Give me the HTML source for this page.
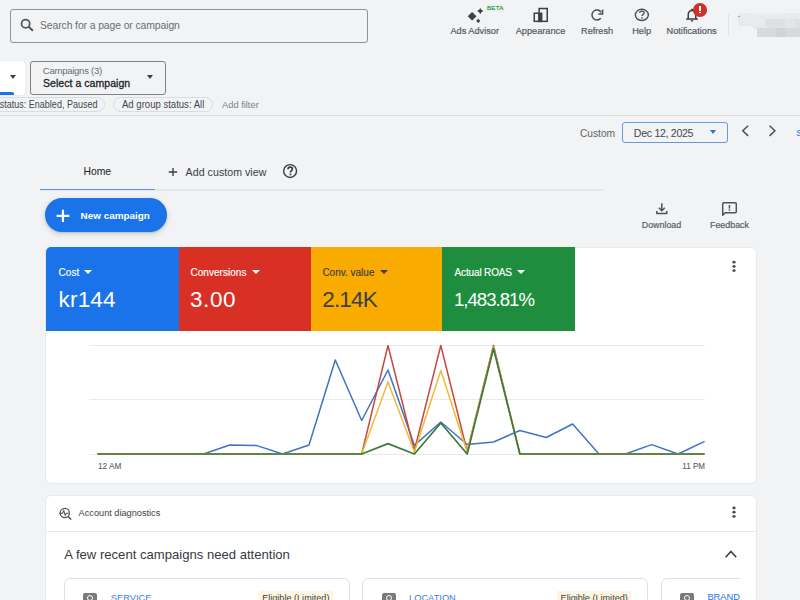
<!DOCTYPE html>
<html><head><meta charset="utf-8">
<style>
*{box-sizing:border-box;margin:0;padding:0}
html,body{width:800px;height:600px;overflow:hidden;background:#f1f3f4;font-family:"Liberation Sans",sans-serif;color:#3c4043}
.a{position:absolute;white-space:nowrap;line-height:1}
.tb{font-size:9.2px;color:#55595e;top:26.9px;transform:translateX(-50%);-webkit-text-stroke:0.2px #55595e}
.chip{position:absolute;height:14.5px;border:1px solid #dadce0;border-radius:8px}
.tile{position:absolute;top:247.6px;height:83px;color:#fff}
.tile .l{position:absolute;top:267.5px;font-size:10px;line-height:1}
.tl{font-size:10px;color:#fff;top:267.6px;-webkit-text-stroke:0.15px currentColor}
.tv{font-size:22.5px;color:#fff;top:288.5px}
.car{width:0;height:0;border-left:4px solid transparent;border-right:4px solid transparent;border-top:4px solid #fff}
.lbl{font-size:8.9px;color:#575b5f;top:220.5px;transform:translateX(-50%);-webkit-text-stroke:0.18px #575b5f}
.sub{position:absolute;top:578px;height:40px;border:1px solid #e0e1e3;border-radius:6px;background:#fff}
.ic{position:absolute;top:592.7px;width:14px;height:12px;background:#7a7a7a;border-radius:2px}
.lnk{font-size:9.3px;color:#3b7ddd;top:593.6px}
.elig{position:absolute;top:590.5px;width:74px;height:14px;background:#fdf5e0}
.elt{font-size:9.1px;color:#3c4043;top:594px}
</style></head><body>

<!-- Search -->
<div class="a" style="left:9.5px;top:9px;width:358.5px;height:33.5px;border:1px solid #8f9296;border-radius:3px"></div>
<svg class="a" style="left:19px;top:16px" width="16" height="17" viewBox="19 16 16 17"><circle cx="25.6" cy="23.7" r="4.1" stroke="#4f5357" stroke-width="1.7" fill="none"/><path d="M28.6 26.7 L32.9 30.7" stroke="#4f5357" stroke-width="1.9"/></svg>
<div class="a" style="left:40px;top:21px;font-size:10.4px;color:#6a6e72;letter-spacing:-0.1px">Search for a page or campaign</div>

<!-- Top icons -->
<svg class="a" style="left:466px;top:7px" width="20" height="18" viewBox="466 7 20 18">
  <path fill="#3c4043" d="M472.1 11.9 L476.5 16.25 L472.1 20.6 L467.75 16.25Z"/>
  <path fill="#3c4043" d="M480.25 7.9 L481.35 9.85 L483.4 11 L481.35 12.15 L480.25 14.2 L479.15 12.15 L477.1 11 L479.15 9.85Z M479.15 9.85 H481.35 V12.15 H479.15Z"/>
  <path fill="#3c4043" d="M478.25 18.8 L480.3 21 L478.25 23.1 L476.2 21Z"/>
</svg>
<div class="a" style="left:485px;top:4.4px;width:19px;height:7.5px;background:#e9f3ec;border-radius:2px"></div>
<div class="a" style="left:486.9px;top:5.4px;font-size:6.2px;color:#2a8a45;letter-spacing:0.25px;-webkit-text-stroke:0.15px #2a8a45">BETA</div>
<div class="a tb" style="left:474.75px">Ads Advisor</div>

<svg class="a" style="left:533px;top:7px" width="16" height="16" viewBox="533 7 16 16">
  <rect x="539.15" y="8.5" width="8.1" height="12.85" stroke="#3c4043" stroke-width="1.5" fill="none"/>
  <rect x="534.25" y="13.25" width="5" height="8.1" stroke="#3c4043" stroke-width="1.5" fill="none"/>
  <rect x="538.4" y="12.5" width="4" height="9.6" fill="#3c4043"/>
</svg>
<div class="a tb" style="left:540.5px">Appearance</div>

<svg class="a" style="left:589px;top:7px" width="17" height="16" viewBox="589 7 17 16"><path d="M601.2 12.3 A5 5 0 1 0 600.8 18.2" stroke="#4a4e52" stroke-width="1.45" fill="none"/><path d="M602.6 9.6 V13.9 H598.4" stroke="#4a4e52" stroke-width="1.5" fill="none"/></svg>
<div class="a tb" style="left:597.1px">Refresh</div>

<svg class="a" style="left:632px;top:6px" width="20" height="20" viewBox="632 6 20 20">
  <ellipse cx="641.85" cy="14.9" rx="6.5" ry="5.6" stroke="#4a4e52" stroke-width="1.4" fill="none"/>
  <path d="M639.7 13.1 C639.7 11.9 640.6 11.2 641.9 11.2 C643.2 11.2 644.1 11.9 644.1 12.9 C644.1 14.4 642 14.4 642 16.1" stroke="#4a4e52" stroke-width="1.3" fill="none"/>
  <rect x="641.25" y="17.2" width="1.5" height="1.4" fill="#4a4e52"/>
</svg>
<div class="a tb" style="left:641.6px">Help</div>

<svg class="a" style="left:683px;top:7.2px" width="18" height="16" viewBox="0 0 24 24" preserveAspectRatio="none"><path fill="#3c4043" d="M12 22c1.1 0 2-.9 2-2h-4c0 1.1.9 2 2 2zm6-6v-5c0-3.07-1.63-5.64-4.5-6.32V4c0-.83-.67-1.5-1.5-1.5s-1.5.67-1.5 1.5v.68C7.64 5.36 6 7.92 6 11v5l-2 2v1h16v-1l-2-2zm-2 1H8v-6c0-2.48 1.51-4.5 4-4.5s4 2.020 4 4.5v6z"/></svg>
<div class="a" style="left:692.9px;top:3.3px;width:13.8px;height:13.4px;border-radius:50%;background:#cf3029"></div>
<div class="a" style="left:699.1px;top:6.1px;width:2px;height:4.8px;background:#fff"></div>
<div class="a" style="left:699.1px;top:11.9px;width:2px;height:1.6px;background:#fff"></div>
<div class="a tb" style="left:691.6px">Notifications</div>

<div class="a" style="left:728px;top:14px;width:1px;height:22px;background:#e2e3e5"></div>
<!-- blurred account -->
<div class="a" style="left:738px;top:13px;width:62px;height:13px;background:#e9eaec;border-top-left-radius:3px"></div>
<div class="a" style="left:752px;top:12px;width:30px;height:3px;background:#eeeff1"></div>
<div class="a" style="left:738px;top:16px;width:2px;height:1.2px;background:#9a9ca0"></div>
<div class="a" style="left:765px;top:19px;width:35px;height:9px;background:#dfe0e2"></div>
<div class="a" style="left:785px;top:19px;width:10px;height:9px;background:#e4e5e7"></div>
<div class="a" style="left:753px;top:26px;width:14px;height:3px;background:#e6e7e9"></div>
<div class="a" style="left:757px;top:28px;width:43px;height:8.5px;background:#d8d9db"></div>
<div class="a" style="left:776px;top:28px;width:10px;height:8.5px;background:#d2d3d5"></div>
<!-- Row 2 -->
<div class="a" style="left:-6px;top:60.5px;width:31px;height:34.5px;background:#fff;border-radius:3px;box-shadow:0 0 1px rgba(0,0,0,.25)"></div>
<div class="a car" style="left:9.8px;top:75px;border-top:4.3px solid #3c4043;border-left-width:3.8px;border-right-width:3.8px"></div>
<div class="a" style="left:0;top:92px;width:14px;height:3px;background:#1a73e8;border-radius:0 2px 0 0"></div>

<div class="a" style="left:30.25px;top:60.5px;width:135.5px;height:34px;border:1px solid #7d8185;border-radius:3px"></div>
<div class="a" style="left:42.8px;top:65.6px;font-size:9.6px;color:#6a6e72;letter-spacing:-0.3px">Campaigns (3)</div>
<div class="a" style="left:43px;top:77.6px;font-size:10.5px;color:#202124;-webkit-text-stroke:0.3px #202124;letter-spacing:0.05px">Select a campaign</div>
<div class="a car" style="left:147.2px;top:75px;border-top:4.3px solid #3c4043;border-left-width:3.6px;border-right-width:3.6px"></div>

<div class="chip" style="left:-20px;top:97px;width:125px"></div>
<div class="a" style="left:-11.4px;width:108.4px;top:99.5px;font-size:10px;color:#44484c;transform:scaleX(0.9);transform-origin:100% 0">status: Enabled, Paused</div>
<div class="chip" style="left:112.5px;top:97px;width:100px"></div>
<div class="a" style="left:121.5px;top:99.5px;font-size:10px;color:#44484c;transform:scaleX(0.955);transform-origin:0 0">Ad group status: All</div>
<div class="a" style="left:222px;top:99.7px;font-size:9.8px;color:#7d8185;transform:scaleX(0.95);transform-origin:0 0">Add filter</div>

<div class="a" style="left:0;top:115px;width:800px;height:1px;background:#dadce0"></div>

<!-- Date row -->
<div class="a" style="left:580px;top:128.5px;font-size:10.2px;color:#5f6368">Custom</div>
<div class="a" style="left:621.75px;top:122.2px;width:106px;height:20.5px;border:1px solid #6b98d6;border-radius:3px"></div>
<div class="a" style="left:633.8px;top:128px;font-size:10.6px;color:#45494d;letter-spacing:-0.3px">Dec 12, 2025</div>
<div class="a car" style="left:710px;top:130px;border-top:4px solid #2a6fd0;border-left-width:3.6px;border-right-width:3.6px"></div>
<svg class="a" style="left:739px;top:124px" width="12" height="15" viewBox="739 124 12 15"><path d="M748.1 125.7 L742.8 130.8 L748.1 135.9" stroke="#4c5054" stroke-width="1.5" fill="none"/></svg>
<svg class="a" style="left:766px;top:124px" width="12" height="15" viewBox="766 124 12 15"><path d="M769.6 125.7 L774.9 130.8 L769.6 135.9" stroke="#4c5054" stroke-width="1.5" fill="none"/></svg>
<div class="a" style="left:796.5px;top:127.5px;font-size:10px;color:#1a73e8">s</div>

<!-- Tabs -->
<div class="a" style="left:83.4px;top:167.1px;font-size:10.4px;color:#202124">Home</div>
<div class="a" style="left:40px;top:189px;width:562.5px;height:1.5px;background:#e6e7e9"></div>
<div class="a" style="left:40.3px;top:188.9px;width:114.4px;height:1.3px;background:#5d93d8"></div>
<svg class="a" style="left:167px;top:166px" width="12" height="12" viewBox="167 166 12 12"><path d="M173 168.1 V176 M168.75 172.05 H177.2" stroke="#3c4043" stroke-width="1.4"/></svg>
<div class="a" style="left:185.6px;top:166.8px;font-size:10.6px;color:#3c4043;letter-spacing:0.05px">Add custom view</div>
<svg class="a" style="left:281px;top:162px" width="18" height="18" viewBox="281 162 18 18">
  <circle cx="290.1" cy="171.05" r="6.45" stroke="#3c4043" stroke-width="1.45" fill="none"/>
  <path d="M288 169.2 C288 167.9 288.9 167.1 290.2 167.1 C291.5 167.1 292.4 167.9 292.4 169 C292.4 170.6 290.4 170.6 290.4 172.6" stroke="#3c4043" stroke-width="1.7" fill="none"/>
  <rect x="289.55" y="173.6" width="1.7" height="1.6" fill="#3c4043"/>
</svg>

<!-- New campaign -->
<div class="a" style="left:45.3px;top:198.4px;width:121.9px;height:33.8px;border-radius:17px;background:#1a73e8;box-shadow:0 1px 2px rgba(60,64,67,.22),0 2px 5px 1px rgba(60,64,67,.12)"></div>
<svg class="a" style="left:55px;top:208px" width="16" height="16" viewBox="55 208 16 16"><path d="M62.95 209.7 V221.9 M56.6 215.8 H69.3" stroke="#fff" stroke-width="2.2"/></svg>
<div class="a" style="left:80.6px;top:211px;font-size:9.9px;color:#fff;font-weight:bold">New campaign</div>

<!-- Download / Feedback -->
<svg class="a" style="left:654px;top:202px" width="15" height="14" viewBox="654 202 15 14">
  <path d="M661.8 203.3 V210.6 M658.8 207.7 L661.8 210.7 L664.8 207.7" stroke="#4f5357" stroke-width="1.5" fill="none"/>
  <path d="M656.8 211 V213.6 H666.8 V211" stroke="#4f5357" stroke-width="1.5" fill="none" stroke-linejoin="round"/>
</svg>
<div class="a lbl" style="left:661.5px">Download</div>
<svg class="a" style="left:720px;top:200px" width="19" height="18" viewBox="720 200 19 18">
  <path d="M722.7 215.2 V203.8 Q722.7 202.7 723.8 202.7 H735.3 Q736.3 202.7 736.3 203.8 V211.8 Q736.3 212.8 735.3 212.8 H725.2 Z" stroke="#4f5357" stroke-width="1.45" fill="none" stroke-linejoin="round"/>
  <rect x="728.7" y="205" width="1.5" height="3.6" fill="#4f5357"/>
  <rect x="728.7" y="209.4" width="1.5" height="1.4" fill="#4f5357"/>
</svg>
<div class="a lbl" style="left:729.5px">Feedback</div>

<!-- Card 1 -->
<div class="a" style="left:46px;top:247.5px;width:710.3px;height:235px;background:#fff;border-radius:5px;box-shadow:0 0 0 1px #e8e9eb"></div>
<div class="a" style="left:46px;top:247.1px;width:132.6px;height:83.5px;background:#1a73e8;border-top-left-radius:5px"></div>
<div class="a" style="left:178.6px;top:247.1px;width:132.4px;height:83.5px;background:#d93025"></div>
<div class="a" style="left:311px;top:247.1px;width:131.4px;height:83.5px;background:#f9ab00"></div>
<div class="a" style="left:442.4px;top:247.1px;width:132.2px;height:83.5px;background:#1e8e3e"></div>

<div class="a tl" style="left:58.6px">Cost</div><div class="a car" style="left:84.4px;top:270.4px"></div>
<div class="a tv" style="left:58.5px;letter-spacing:0.2px">kr144</div>
<div class="a tl" style="left:190.4px;letter-spacing:0.05px">Conversions</div><div class="a car" style="left:252px;top:270.4px"></div>
<div class="a tv" style="left:190px;letter-spacing:0.6px">3.00</div>
<div class="a tl" style="left:322.4px;color:#3c4043">Conv. value</div><div class="a car" style="left:380px;top:270.4px;border-top-color:#3c4043"></div>
<div class="a tv" style="left:322.2px;color:#3c4043;letter-spacing:-0.8px">2.14K</div>
<div class="a tl" style="left:454.6px;letter-spacing:-0.15px">Actual ROAS</div><div class="a car" style="left:516.6px;top:270.4px"></div>
<div class="a tv" style="left:454px;font-size:18.6px;top:291.2px;letter-spacing:-1.0px">1,483.81%</div>

<svg class="a" style="left:731px;top:259px" width="6" height="15" viewBox="731 259 6 15"><ellipse cx="734" cy="262.2" rx="1.65" ry="1.4" fill="#4a4e52"/><ellipse cx="734" cy="266.4" rx="1.65" ry="1.4" fill="#4a4e52"/><ellipse cx="734" cy="270.6" rx="1.65" ry="1.4" fill="#4a4e52"/></svg>

<!-- Chart -->
<svg class="a" style="left:0;top:0" width="800" height="600" viewBox="0 0 800 600">
  <g stroke="#eaeaea" stroke-width="1">
    <line x1="89.3" y1="345.5" x2="704.6" y2="345.5"/>
    <line x1="89.3" y1="399.5" x2="704.6" y2="399.5"/>
    <line x1="89.3" y1="454.5" x2="704.6" y2="454.5"/>
  </g>
  <g fill="none" stroke-width="1.5" stroke-linejoin="round">
    <polyline stroke="#3d74c6" points="97.5,454 124.4,454 150.7,454 177.1,454 203.5,454 229.8,445 256.2,445.4 282.6,454 309,445 335.3,360 361.7,420.5 388,370 414.4,445.4 440.8,422 467.2,444.5 493.5,442 519.9,430.5 546.3,437.5 572.6,424 599,454 625.4,454 651.7,444.6 678.1,454 704.6,441.4"/>
    <polyline stroke="#c44a42" points="97.5,454 361.7,454 388,345.5 414.4,450.5 440.8,345.5 467.2,451.5 493.5,345.5 519.9,454 704.6,454"/>
    <polyline stroke="#edbb38" points="97.5,454 361.7,454 388,382 414.4,452 440.8,370.5 467.2,452 493.5,347 519.9,454 704.6,454"/>
    <polyline stroke="#3b7a3c" stroke-width="1.7" points="97.5,454 361.7,454 388,443.6 414.4,454 440.8,423 467.2,454 493.5,348.5 519.9,454 704.6,454"/>
  </g>
</svg>
<div class="a" style="left:98.3px;top:460.6px;font-size:9.6px;color:#5a5e62;transform:scaleX(0.86);transform-origin:0 0;-webkit-text-stroke:0.1px #5a5e62">12 AM</div>
<div class="a" style="left:677px;width:28px;text-align:right;top:460.6px;font-size:9.6px;color:#5a5e62;transform:scaleX(0.84);transform-origin:100% 0;-webkit-text-stroke:0.1px #5a5e62">11 PM</div>

<!-- Card 2 -->
<div class="a" style="left:46px;top:496.1px;width:710.3px;height:120px;background:#fff;border-radius:5px;box-shadow:0 0 0 1px #e8e9eb"></div>
<svg class="a" style="left:57px;top:505px" width="17" height="17" viewBox="57 505 17 17">
  <circle cx="64.8" cy="513" r="4.6" stroke="#4f5357" stroke-width="1.25" fill="none"/>
  <path d="M68.1 516.4 L71.2 519.6" stroke="#4f5357" stroke-width="1.5"/>
  <path d="M59 513.3 H62.6 L63.8 510.6 L65.2 515.4 L66.3 513.3 H68.5" stroke="#4f5357" stroke-width="1.05" fill="none"/>
</svg>
<div class="a" style="left:78.6px;top:509.2px;font-size:9.2px;color:#3c4043">Account diagnostics</div>
<svg class="a" style="left:731px;top:505px" width="6" height="15" viewBox="731 505 6 15"><ellipse cx="734" cy="508" rx="1.65" ry="1.4" fill="#4a4e52"/><ellipse cx="734" cy="512.2" rx="1.65" ry="1.4" fill="#4a4e52"/><ellipse cx="734" cy="516.4" rx="1.65" ry="1.4" fill="#4a4e52"/></svg>
<div class="a" style="left:46px;top:531.2px;width:710px;height:1px;background:#e6e7e9"></div>
<div class="a" style="left:64.25px;top:547.5px;font-size:13.1px;color:#36393d">A few recent campaigns need attention</div>
<svg class="a" style="left:723px;top:548px" width="16" height="11" viewBox="723 548 16 11"><path d="M725.6 557.2 L730.9 551.5 L736.2 557.2" stroke="#3c4043" stroke-width="1.6" fill="none"/></svg>

<!-- sub cards (clipped) -->
<div class="a" style="left:0;top:570px;width:740px;height:30px;overflow:hidden">
  <div class="sub" style="left:64.3px;top:8px;width:286.2px"></div>
  <div class="sub" style="left:362.4px;top:8px;width:285.8px"></div>
  <div class="sub" style="left:660.9px;top:8px;width:286px"></div>
</div>
<div class="ic" style="left:83.4px"></div>
<div class="a" style="left:87.1px;top:594.8px;width:6px;height:6px;border-radius:50%;border:1.6px solid #fff;background:#7a7a7a"></div>
<div class="a lnk" style="left:110.8px">SERVICE</div>
<div class="elig" style="left:258.6px"></div>
<div class="a elt" style="left:262.2px">Eligible (Limited)</div>

<div class="ic" style="left:381.6px"></div>
<div class="a" style="left:385.6px;top:594.8px;width:6px;height:6px;border-radius:50%;border:1.6px solid #fff;background:#7a7a7a"></div>
<div class="a lnk" style="left:409px">LOCATION</div>
<div class="elig" style="left:557px"></div>
<div class="a elt" style="left:560.6px">Eligible (Limited)</div>

<div class="ic" style="left:679.8px"></div>
<div class="a" style="left:683.8px;top:594.8px;width:6px;height:6px;border-radius:50%;border:1.6px solid #fff;background:#7a7a7a"></div>
<div class="a" style="left:707.4px;top:590px;width:32.6px;height:10px;overflow:hidden"><div class="a" style="left:0;top:2.6px;font-size:9.3px;color:#1a73e8">BRAND</div></div>

</body></html>
